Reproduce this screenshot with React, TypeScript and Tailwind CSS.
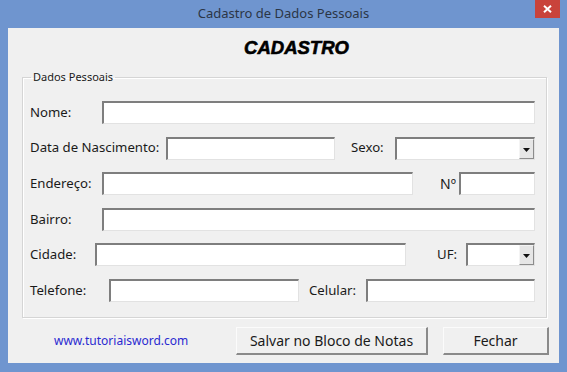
const ui = { fontFamily: '"Noto Sans", "Open Sans", sans-serif' };

function Field({ w }: { w: string }) {
  return (
    <input
      type="text"
      readOnly
      className={`${w} h-[23px] shrink-0 border-t-2 border-l-2 border-r border-b border-t-[#7e7e7e] border-l-[#7e7e7e] border-r-[#e2e2e2] border-b-[#e2e2e2] bg-white outline-none`}
    />
  );
}

function Combo({ w }: { w: string }) {
  return (
    <div
      className={`${w} flex h-[23px] shrink-0 items-stretch justify-end border-t-2 border-l-2 border-r border-b border-t-[#7e7e7e] border-l-[#7e7e7e] border-r-[#e2e2e2] border-b-[#e2e2e2] bg-white`}
    >
      <div className="flex w-[15px] items-center justify-center border-l border-t border-l-[#f4f4f4] border-t-[#f4f4f4] border-r border-b border-r-[#8c8c8c] border-b-[#8c8c8c] bg-[#e6e6e6] pt-[2px]">
        <svg width="7" height="4" viewBox="0 0 7 4">
          <path d="M0 0h7L3.5 4z" fill="#111" />
        </svg>
      </div>
    </div>
  );
}

function Label({ w, pl = '', children }: { w: string; pl?: string; children: React.ReactNode }) {
  return <span className={`${w} ${pl} shrink-0 text-[13.2px] leading-none text-[#1a1a1a]`}>{children}</span>;
}

function Btn({ w, children }: { w: string; children: React.ReactNode }) {
  return (
    <button
      type="button"
      className={`${w} h-[28px] shrink-0 border-t border-l border-t-[#fbfbfb] border-l-[#fbfbfb] border-r-2 border-b-2 border-r-[#8a8a8a] border-b-[#8a8a8a] bg-[#f0f0f0] pt-[1px] text-[14px] text-[#1a1a1a]`}
    >
      {children}
    </button>
  );
}

export default function App() {
  return (
    <div className="relative flex h-[372px] w-[567px] flex-col bg-[#6f95cf]" style={ui}>
      {/* Title bar */}
      <div className="flex h-[28px] items-center justify-center text-[13px] text-[#2b3646]">
        Cadastro de Dados Pessoais
      </div>
      <div className="absolute right-[7px] top-0 flex h-[18px] w-[25px] items-center justify-center bg-[#c9433b]">
        <svg width="9" height="8" viewBox="0 0 9 8">
          <path d="M1 0.8L8 7.2M8 0.8L1 7.2" stroke="#fff" strokeWidth="2" />
        </svg>
      </div>

      {/* Client area */}
      <div className="mx-[8px] mb-[9px] flex flex-1 flex-col bg-[#f0f0f0]">
        <h1
          className="pl-[26px] pt-[9px] text-center text-[18.5px] leading-[22px] font-bold italic text-black [-webkit-text-stroke:0.6px_#000]"
          style={{ fontFamily: '"Liberation Sans", Arial, sans-serif' }}
        >
          CADASTRO
        </h1>

        <fieldset className="ml-[14px] mt-[11px] w-[525px] border border-[#d5d5d5] px-0 pb-[15px] pt-[17px] shadow-[1px_1px_0_#fff,inset_1px_1px_0_#fff]">
          <legend className="ml-[8px] px-[2px] text-[11px] leading-[14px] text-[#1a1a1a]">Dados Pessoais</legend>
          <div className="flex flex-col gap-[12.6px] pl-[7px]">
            <div className="flex items-center">
              <Label w="w-[72px]">Nome:</Label>
              <Field w="w-[433px]" />
            </div>
            <div className="flex items-center">
              <Label w="w-[136px]">Data de Nascimento:</Label>
              <Field w="w-[169px]" />
              <Label w="w-[60px]" pl="pl-[16px]">Sexo:</Label>
              <Combo w="w-[140px]" />
            </div>
            <div className="flex items-center">
              <Label w="w-[72px]">Endereço:</Label>
              <Field w="w-[311px]" />
              <Label w="w-[46px]" pl="pl-[27px]">
                <span className="text-[14px]">Nº</span>
              </Label>
              <Field w="w-[76px]" />
            </div>
            <div className="flex items-center">
              <Label w="w-[72px]">Bairro:</Label>
              <Field w="w-[433px]" />
            </div>
            <div className="flex items-center">
              <Label w="w-[65px]">Cidade:</Label>
              <Field w="w-[311px]" />
              <Label w="w-[60px]" pl="pl-[31px]">UF:</Label>
              <Combo w="w-[69px]" />
            </div>
            <div className="flex items-center">
              <Label w="w-[79px]">Telefone:</Label>
              <Field w="w-[190px]" />
              <Label w="w-[67px]" pl="pl-[10px]">Celular:</Label>
              <Field w="w-[169px]" />
            </div>
          </div>
        </fieldset>

        <div className="mt-[9px] flex items-center pl-[46px]">
          <span className="w-[182px] shrink-0 pt-[1px] text-[12px] text-[#2a2ad0]">www.tutoriaisword.com</span>
          <Btn w="w-[192px]">Salvar no Bloco de Notas</Btn>
          <div className="w-[15px] shrink-0" />
          <Btn w="w-[106px]">Fechar</Btn>
        </div>
      </div>
    </div>
  );
}
